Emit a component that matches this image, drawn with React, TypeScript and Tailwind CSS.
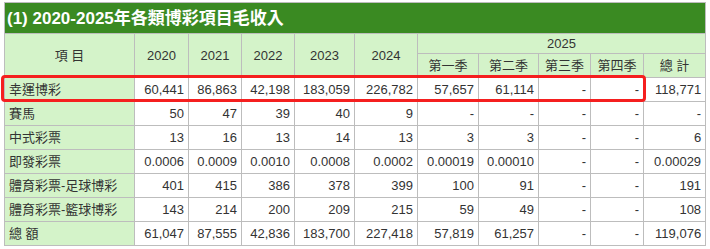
const widths = [130, 54, 53, 53, 60, 63, 61, 60, 52, 53, 62]

const rows: [string, string[]][] = [
  ['幸運博彩', ['60,441', '86,863', '42,198', '183,059', '226,782', '57,657', '61,114', '-', '-', '118,771']],
  ['賽馬', ['50', '47', '39', '40', '9', '-', '-', '-', '-', '-']],
  ['中式彩票', ['13', '16', '13', '14', '13', '3', '3', '-', '-', '6']],
  ['即發彩票', ['0.0006', '0.0009', '0.0010', '0.0008', '0.0002', '0.00019', '0.00010', '-', '-', '0.00029']],
  ['體育彩票-足球博彩', ['401', '415', '386', '378', '399', '100', '91', '-', '-', '191']],
  ['體育彩票-籃球博彩', ['143', '214', '200', '209', '215', '59', '49', '-', '-', '108']],
  ['總 額', ['61,047', '87,555', '42,836', '183,700', '227,418', '57,819', '61,257', '-', '-', '119,076']],
]

const th = 'border border-[#bdbdbd] bg-[#d4f3c9] font-normal text-center px-1'
const td = 'border border-[#bdbdbd] bg-white text-right px-[4px] h-[24px]'

export default function App() {
  return (
    <div className="relative pl-[4px] pt-[2px] text-[13px] text-[#333] font-['Liberation_Sans','Noto_Sans_CJK_TC',sans-serif]">
      <table className="table-fixed border-collapse w-[702px] leading-none">
        <colgroup>
          {widths.map((w, i) => (
            <col key={i} style={{ width: w }} />
          ))}
        </colgroup>
        <thead>
          <tr>
            <th
              colSpan={11}
              className="border border-[#bdbdbd] bg-[#3a8a22] text-white text-left font-bold text-[17px] h-[31px] px-[2px]"
            >
              (1) 2020-2025年各類博彩項目毛收入
            </th>
          </tr>
          <tr className="h-[20px]">
            <th rowSpan={2} className={th}>項 目</th>
            <th rowSpan={2} className={th}>2020</th>
            <th rowSpan={2} className={th}>2021</th>
            <th rowSpan={2} className={th}>2022</th>
            <th rowSpan={2} className={th}>2023</th>
            <th rowSpan={2} className={th}>2024</th>
            <th colSpan={5} className={th}>2025</th>
          </tr>
          <tr className="h-[24px]">
            <th className={th}>第一季</th>
            <th className={th}>第二季</th>
            <th className={th}>第三季</th>
            <th className={th}>第四季</th>
            <th className={th}>總 計</th>
          </tr>
        </thead>
        <tbody>
          {rows.map(([name, vals]) => (
            <tr key={name}>
              <td className="border border-[#bdbdbd] bg-[#d4f3c9] text-left px-[4px] h-[24px]">{name}</td>
              {vals.map((v, i) => (
                <td key={i} className={td}>{v}</td>
              ))}
            </tr>
          ))}
        </tbody>
      </table>
      {/* highlight around the first data row */}
      <div className="absolute left-[1px] top-[75px] w-[645px] h-[27px] border-[3px] border-[#f51f1f] rounded-[4px]" />
    </div>
  )
}
